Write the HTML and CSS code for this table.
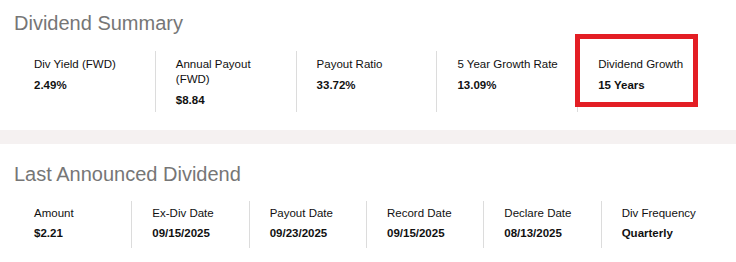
FILE: index.html
```html
<!DOCTYPE html>
<html>
<head>
<meta charset="utf-8">
<link rel="stylesheet" href="styles.css">
</head>
<body>
<section class="section section-summary">
  <h2 class="title">Dividend Summary</h2>
  <div class="stats stats-5">
    <div class="stat">
      <div class="label">Div Yield (FWD)</div>
      <div class="value">2.49%</div>
    </div>
    <div class="stat">
      <div class="label">Annual Payout<br>(FWD)</div>
      <div class="value">$8.84</div>
    </div>
    <div class="stat">
      <div class="label">Payout Ratio</div>
      <div class="value">33.72%</div>
    </div>
    <div class="stat">
      <div class="label">5 Year Growth Rate</div>
      <div class="value">13.09%</div>
    </div>
    <div class="stat stat-highlight">
      <div class="label">Dividend Growth</div>
      <div class="value">15 Years</div>
    </div>
  </div>
</section>
<div class="band"></div>
<section class="section section-last">
  <h2 class="title">Last Announced Dividend</h2>
  <div class="stats stats-6">
    <div class="stat">
      <div class="label">Amount</div>
      <div class="value">$2.21</div>
    </div>
    <div class="stat">
      <div class="label">Ex-Div Date</div>
      <div class="value">09/15/2025</div>
    </div>
    <div class="stat">
      <div class="label">Payout Date</div>
      <div class="value">09/23/2025</div>
    </div>
    <div class="stat">
      <div class="label">Record Date</div>
      <div class="value">09/15/2025</div>
    </div>
    <div class="stat">
      <div class="label">Declare Date</div>
      <div class="value">08/13/2025</div>
    </div>
    <div class="stat">
      <div class="label">Div Frequency</div>
      <div class="value">Quarterly</div>
    </div>
  </div>
</section>
</body>
</html>
```

FILE: styles.css
```css
html, body {
  margin: 0;
  padding: 0;
  background: #ffffff;
  font-family: "Liberation Sans", Arial, sans-serif;
  color: #1a1a1a;
}

.section {
  padding: 0 14px;
}

.section-summary {
  padding-top: 11px;
  padding-bottom: 18px;
}

.section-last {
  padding-top: 18px;
}

.title {
  margin: 0;
  font-size: 20px;
  line-height: 24px;
  font-weight: normal;
  color: #767676;
}

.stats {
  display: grid;
  width: 704px;
}

.stats-5 {
  grid-template-columns: repeat(5, 1fr);
  margin-top: 16px;
}

.stats-6 {
  grid-template-columns: repeat(6, 1fr);
  margin-top: 15px;
}

.stat {
  position: relative;
  padding: 6px 6px 4px 20px;
  border-left: 1px solid #dcdcdc;
}

.stat:first-child {
  border-left: 0;
}

.stats-6 .stat {
  padding: 5px 6px 7px 20px;
}

.label {
  font-size: 11.5px;
  line-height: 15px;
  color: #111;
}

.value {
  margin-top: 6px;
  font-size: 11.5px;
  line-height: 15px;
  font-weight: bold;
  color: #111;
}

.stats-6 .value {
  margin-top: 5px;
}

.stat-highlight::after {
  content: "";
  position: absolute;
  left: -3px;
  top: -17px;
  width: 123px;
  height: 73px;
  box-sizing: border-box;
  border: 5px solid #e31e24;
}

.band {
  height: 14px;
  background: #f5f1f1;
}
```
